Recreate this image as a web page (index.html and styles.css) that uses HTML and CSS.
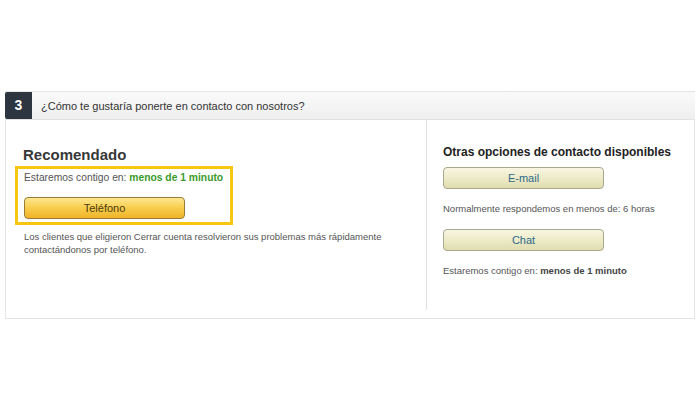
FILE: index.html
```html
<!DOCTYPE html>
<html lang="es">
<head>
    <meta charset="UTF-8">
    <title>Contacto</title>
    <link rel="stylesheet" href="styles.css">
</head>
<body>
    <div class="contact">
        <!-- paso 3 -->
        <div class="step-header">
            <span class="step-num">3</span>
            <span class="step-title">¿Cómo te gustaría ponerte en contacto con nosotros?</span>
        </div>

        <div class="step-body">
            <div class="col-main">
                <h2 class="title">Recomendado</h2>
                <div class="highlight">
                    <div class="wait">Estaremos contigo en: <b class="green">menos de 1 minuto</b></div>
                    <input type="button" class="btn btn-gold" value="Teléfono">
                </div>
                <p class="note">Los clientes que eligieron Cerrar cuenta resolvieron sus problemas más rápidamente contactándonos por teléfono.</p>
            </div>

            <div class="col-side">
                <h3 class="side-title">Otras opciones de contacto disponibles</h3>
                <input type="button" class="btn btn-plain" value="E-mail">
                <div class="info">Normalmente respondemos en menos de: 6 horas</div>
                <input type="button" class="btn btn-plain" value="Chat">
                <div class="info">Estaremos contigo en: <b>menos de 1 minuto</b></div>
            </div>
        </div>
    </div>
</body>
</html>
```

FILE: styles.css
```css
body {
    margin: 0;
    background-color: #fff;
    font-family: "Liberation Sans", Arial, sans-serif;
    color: #555;
}

.contact {
    width: 690px;
    margin: 91px 0 0 5px;
}

.step-header {
    display: flex;
    align-items: center;
    height: 27px;
    background: linear-gradient(#fafafa, #efefef);
    border-top: 1px solid #e6e6e6;
    border-bottom: 1px solid #e2e2e2;
}

.step-num {
    width: 27px;
    height: 27px;
    line-height: 27px;
    text-align: center;
    background-color: #2c3540;
    color: #fff;
    font-weight: bold;
    font-size: 14px;
    border-radius: 2px 0 0 2px;
}

.step-title {
    margin-left: 9px;
    font-size: 11px;
    color: #333;
}

.step-body {
    display: flex;
    height: 198px;
    border: 1px solid #e4e4e4;
    border-top: none;
}

.col-main {
    width: 402px;
    padding: 26px 9px 0 9px;
}

.title {
    margin: 0 0 2px 8px;
    font-size: 15px;
    line-height: 18px;
    color: #383838;
}

.highlight {
    width: 203px;
    padding: 2px 3px 3px 6px;
    border: 3px solid #f6c70e;
}

.wait {
    font-size: 10.3px;
    line-height: 14px;
}

.green {
    color: #3a9b2c;
}

.btn {
    display: block;
    width: 161px;
    height: 22px;
    padding: 0;
    font-family: "Liberation Sans", Arial, sans-serif;
    font-size: 11px;
    border-radius: 4px;
    cursor: pointer;
}

.btn-gold {
    margin-top: 12px;
    color: #4a3a10;
    background: linear-gradient(#fde790, #f8cd4c 50%, #f0b42a);
    border: 1px solid #9a7c36;
}

.note {
    margin: 5px 0 0 9px;
    font-size: 9.5px;
    line-height: 13px;
}

.col-side {
    flex: 1;
    margin-bottom: 8px;
    padding: 25px 0 0 16px;
    border-left: 1px solid #e0e0e0;
}

.side-title {
    margin: 0 0 8px 0;
    font-size: 12px;
    line-height: 14px;
    color: #222;
}

.btn-plain {
    color: #2c6a8c;
    background: linear-gradient(#f8f6e2, #ebe8c4 60%, #e0dcb0);
    border: 1px solid #a9a78c;
}

.info {
    margin: 14px 0 14px 0;
    font-size: 9.5px;
    line-height: 12px;
}

.info b {
    color: #444;
}
```
